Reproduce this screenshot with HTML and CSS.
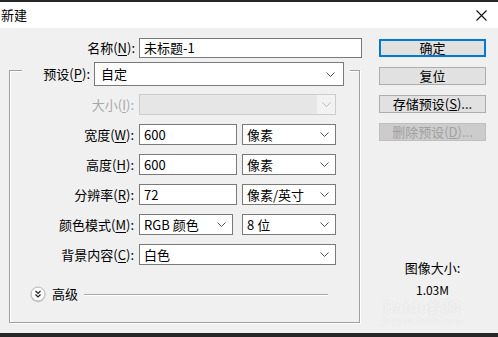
FILE: index.html
```html
<!DOCTYPE html>
<html lang="zh-CN">
<head>
    <meta charset="UTF-8">
    <meta name="viewport" content="width=device-width, initial-scale=1.0">
    <title>新建</title>
    <link rel="stylesheet" href="styles.css">
</head>
<body>
    <div class="window">
        <div class="titlebar">
            <span class="title">新建</span>
            <svg class="close" width="11" height="11" viewBox="0 0 11 11">
                <path d="M0.5 0.5 L10.5 10.5 M10.5 0.5 L0.5 10.5" stroke="#111" stroke-width="1.1" fill="none"/>
            </svg>
        </div>

        <div class="content">
            <div class="main">
                <div class="row name-row">
                    <label class="lbl name-lbl">名称(<u>N</u>):</label>
                    <div class="field name-field">未标题-1</div>
                </div>

                <div class="group">
                    <div class="row preset-row">
                        <label class="lbl preset-lbl">预设(<u>P</u>):</label>
                        <div class="field select preset">
                            <span>自定</span>
                            <svg class="chev" width="9" height="5" viewBox="0 0 9 5"><polyline points="0.5,0.5 4.5,4.5 8.5,0.5" fill="none" stroke="#555"/></svg>
                        </div>
                    </div>

                    <div class="row">
                        <label class="lbl off">大小(<u>I</u>):</label>
                        <div class="field select full disabled">
                            <span class="dd-off"><svg class="chev" width="9" height="5" viewBox="0 0 9 5"><polyline points="0.5,0.5 4.5,4.5 8.5,0.5" fill="none" stroke="#bbb"/></svg></span>
                        </div>
                    </div>

                    <div class="row">
                        <label class="lbl">宽度(<u>W</u>):</label>
                        <div class="field num">600</div>
                        <div class="field select unit">
                            <span>像素</span>
                            <svg class="chev" width="9" height="5" viewBox="0 0 9 5"><polyline points="0.5,0.5 4.5,4.5 8.5,0.5" fill="none" stroke="#555"/></svg>
                        </div>
                    </div>

                    <div class="row">
                        <label class="lbl">高度(<u>H</u>):</label>
                        <div class="field num">600</div>
                        <div class="field select unit">
                            <span>像素</span>
                            <svg class="chev" width="9" height="5" viewBox="0 0 9 5"><polyline points="0.5,0.5 4.5,4.5 8.5,0.5" fill="none" stroke="#555"/></svg>
                        </div>
                    </div>

                    <div class="row">
                        <label class="lbl">分辨率(<u>R</u>):</label>
                        <div class="field num">72</div>
                        <div class="field select unit">
                            <span>像素/英寸</span>
                            <svg class="chev" width="9" height="5" viewBox="0 0 9 5"><polyline points="0.5,0.5 4.5,4.5 8.5,0.5" fill="none" stroke="#555"/></svg>
                        </div>
                    </div>

                    <div class="row">
                        <label class="lbl">颜色模式(<u>M</u>):</label>
                        <div class="field select mode">
                            <span>RGB 颜色</span>
                            <svg class="chev" width="9" height="5" viewBox="0 0 9 5"><polyline points="0.5,0.5 4.5,4.5 8.5,0.5" fill="none" stroke="#555"/></svg>
                        </div>
                        <div class="field select unit">
                            <span>8 位</span>
                            <svg class="chev" width="9" height="5" viewBox="0 0 9 5"><polyline points="0.5,0.5 4.5,4.5 8.5,0.5" fill="none" stroke="#555"/></svg>
                        </div>
                    </div>

                    <div class="row">
                        <label class="lbl">背景内容(<u>C</u>):</label>
                        <div class="field select full">
                            <span>白色</span>
                            <svg class="chev" width="9" height="5" viewBox="0 0 9 5"><polyline points="0.5,0.5 4.5,4.5 8.5,0.5" fill="none" stroke="#555"/></svg>
                        </div>
                    </div>

                    <div class="advanced">
                        <svg class="adv-icon" width="16" height="16" viewBox="0 0 16 16">
                            <circle cx="8" cy="8" r="7" fill="#fbfbfb" stroke="#b4b4b4"/>
                            <polyline points="5.5,5 8,7.5 10.5,5" fill="none" stroke="#222" stroke-width="1.2"/>
                            <polyline points="5.5,8.5 8,11 10.5,8.5" fill="none" stroke="#222" stroke-width="1.2"/>
                        </svg>
                        <span class="adv-text">高级</span>
                        <span class="adv-line"></span>
                    </div>
                </div>
            </div>

            <div class="side">
                <button class="btn default">确定</button>
                <button class="btn">复位</button>
                <button class="btn">存储预设(<u>S</u>)...</button>
                <button class="btn" disabled>删除预设(<u>D</u>)...</button>

                <div class="size-title">图像大小:</div>
                <div class="size-value">1.03M</div>
            </div>
        </div>

        <div class="watermark">
            <span class="wm-logo">Baidu经验</span>
            <span class="wm-url">jingyan.baidu.com</span>
        </div>
    </div>
</body>
</html>
```

FILE: styles.css
```css
body {
    margin: 0;
    font-family: "Noto Sans CJK SC", "Noto Sans", sans-serif;
    font-size: 13px;
    color: #000;
}
.window {
    position: relative;
    width: 498px;
    height: 337px;
    background-color: #f0f0f0;
    border-top: 2px solid #262626;
    border-bottom: 4px solid #262626;
    box-sizing: border-box;
    overflow: hidden;
}
.titlebar {
    height: 26px;
    background-color: #fff;
    display: flex;
    align-items: center;
    justify-content: space-between;
    padding: 0 11px 0 1px;
}
.title {
    font-size: 13px;
    line-height: 16px;
}
.close {
    display: block;
    margin-top: 1px;
}
.content {
    display: flex;
    padding-top: 10px;
}
.main {
    width: 362px;
}
.row {
    display: flex;
    align-items: center;
    height: 21px;
    margin-top: 9px;
}
.lbl {
    width: 124px;
    margin-right: 5px;
    text-align: right;
    line-height: 16px;
    white-space: nowrap;
}
.lbl u {
    text-underline-offset: 2px;
}
.lbl.off {
    color: #a8a8a8;
}
.name-row {
    margin-top: 0;
    height: 20px;
}
.name-lbl {
    width: 135px;
    margin-right: 4px;
}
.field {
    height: 100%;
    box-sizing: border-box;
    border: 1px solid #7a7a7a;
    background-color: #fff;
    display: flex;
    align-items: center;
    padding-left: 4px;
    line-height: 16px;
    white-space: nowrap;
}
.name-field {
    width: 223px;
}
.select {
    justify-content: space-between;
    padding-right: 6px;
}
.chev {
    display: block;
}
.group {
    margin: 12px 0 0 9px;
    width: 351px;
    height: 253px;
    box-sizing: border-box;
    border: 1px solid #a0a0a0;
    box-shadow: inset 1px 1px 0 #fff, 1px 1px 0 #fff;
}
.preset-row {
    margin: -9px 0 0 12px;
    width: 328px;
    height: 24px;
    background-color: #f0f0f0;
}
.preset-lbl {
    width: 68px;
    margin-right: 4px;
}
.preset {
    width: 250px;
    padding-left: 6px;
    padding-right: 8px;
}
.preset-row + .row {
    margin-top: 8px;
}
.full {
    width: 197px;
}
.num {
    width: 98px;
    margin-right: 5px;
}
.mode {
    width: 94px;
    margin-right: 9px;
}
.unit {
    width: 94px;
}
.disabled {
    border-color: #cccccc;
    background-color: #e6e6e6;
    justify-content: flex-end;
    padding: 0;
}
.dd-off {
    width: 18px;
    height: 100%;
    background-color: #f2f2f2;
    display: flex;
    align-items: center;
    justify-content: center;
}
.advanced {
    display: flex;
    align-items: center;
    margin: 21px 31px 0 20px;
    height: 16px;
}
.adv-icon {
    display: block;
    filter: drop-shadow(0 1px 0.5px rgba(0, 0, 0, 0.15));
}
.adv-text {
    margin-left: 6px;
    line-height: 16px;
}
.adv-line {
    flex: 1;
    height: 1px;
    margin-left: 6px;
    background-color: #a8a8a8;
    box-shadow: 0 1px 0 #fff;
}
.side {
    margin-left: 17px;
    width: 107px;
    padding-top: 1px;
    display: flex;
    flex-direction: column;
}
.btn {
    height: 18px;
    margin-bottom: 10px;
    padding: 0;
    font-family: inherit;
    font-size: 13px;
    line-height: 14px;
    color: #000;
    background-color: #e1e1e1;
    border: 1px solid #adadad;
}
.btn.default {
    border: 2px solid #0078d7;
}
.btn:disabled {
    background-color: #cccccc;
    border-color: #bfbfbf;
    color: #a0a0a0;
}
.size-title {
    margin-top: 109px;
    text-align: center;
    line-height: 16px;
}
.size-value {
    margin-top: 7px;
    text-align: center;
    font-size: 12px;
    line-height: 14px;
}
.watermark {
    position: absolute;
    left: 381px;
    top: 296px;
    display: flex;
    flex-direction: column;
    align-items: center;
    pointer-events: none;
}
.wm-logo {
    font-family: "Noto Sans CJK SC", sans-serif;
    font-weight: bold;
    font-size: 16px;
    line-height: 17px;
    color: rgba(255, 255, 255, 0.7);
    text-shadow: 0 0 1px rgba(170, 170, 170, 0.45);
}
.wm-url {
    font-family: "Liberation Serif", serif;
    font-size: 11px;
    line-height: 11px;
    color: rgba(255, 255, 255, 0.7);
    text-shadow: 0 0 1px rgba(170, 170, 170, 0.35);
}
```
